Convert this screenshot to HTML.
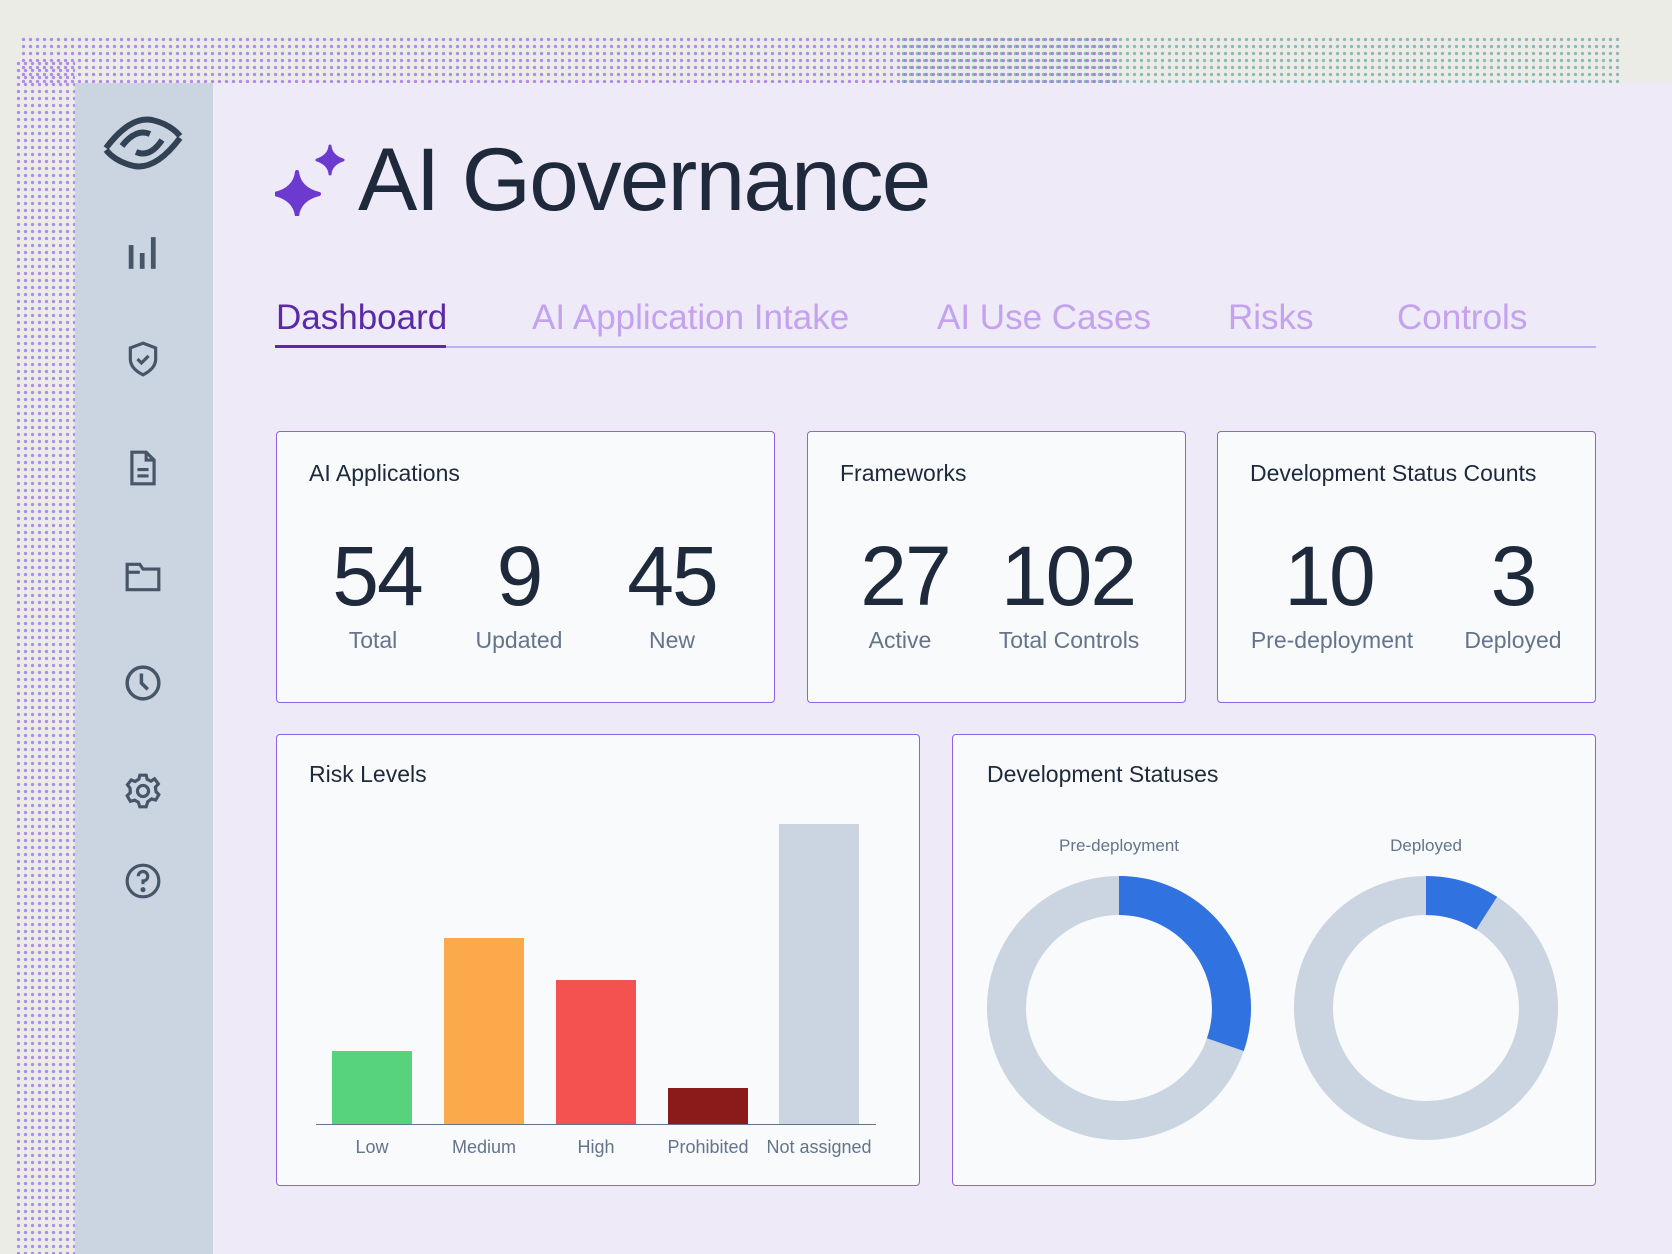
<!DOCTYPE html>
<html><head><meta charset="utf-8"><style>
*{margin:0;padding:0;box-sizing:border-box}
body{width:1672px;height:1254px;overflow:hidden;background:#ecece7;font-family:"Liberation Sans",sans-serif;position:relative}
.dots{position:absolute;background-image:radial-gradient(circle,rgba(150,100,235,.7) 1.5px,transparent 1.9px);background-size:7px 7px}
.dots2{position:absolute;background-image:radial-gradient(circle,rgba(80,150,160,.6) 1.5px,transparent 1.9px);background-size:7px 7px}
.panel{position:absolute;left:75px;top:83px;width:1597px;height:1171px;background:#eeeaf8}
.side{position:absolute;left:75px;top:83px;width:138px;height:1171px;background:#cbd5e1}
.ic{position:absolute;left:124px;width:38px;height:38px}
.card{position:absolute;background:#f8fafc;border:1.6px solid #8f62e4;border-radius:4px}
.ct{position:absolute;left:32px;top:28px;font-size:23px;color:#1e293b}
.num{position:absolute;top:102px;font-size:84px;color:#1e293b;transform:translateX(-50%);letter-spacing:-2px;line-height:1}
.lab{position:absolute;top:195px;font-size:23px;color:#64748b;transform:translateX(-50%);white-space:nowrap}
.tab{position:absolute;top:298px;font-size:35px;color:#c4a2ee}
.bar{position:absolute;width:80px}
.bl{position:absolute;top:1137px;font-size:18px;color:#64748b;transform:translateX(-50%);white-space:nowrap}
</style></head><body>
<div class="dots" style="left:20px;top:36px;width:1100px;height:47px"></div>
<div class="dots2" style="left:900px;top:36px;width:720px;height:47px"></div>
<div class="dots" style="left:15px;top:60px;width:60px;height:1194px"></div>
<div class="panel"></div>
<div class="side"></div>
<svg class="ic" style="left:100px;top:112px;width:86px;height:62px" viewBox="0 0 86 62" fill="none" stroke="#334155" stroke-width="6">
<path d="M6 36 Q30 4 52 8 Q70 12 80 24"/><path d="M80 26 Q56 58 34 54 Q16 50 6 38"/><path d="M22 34 Q36 16 50 22"/><path d="M62 28 Q50 46 36 40"/></svg>
<svg class="ic" style="top:234px" viewBox="0 0 24 24" fill="#475569"><rect x="3" y="7" width="3" height="15"/><rect x="10" y="12" width="3" height="10"/><rect x="17" y="2" width="3" height="20"/></svg>
<svg class="ic" style="top:340px" viewBox="0 0 24 24" fill="none" stroke="#475569" stroke-width="2"><path d="M12 2 L20 5 V12 C20 17 16 20 12 22 C8 20 4 17 4 12 V5 Z"/><path d="M8.5 12 L11 14.5 L15.5 10"/></svg>
<svg class="ic" style="top:449px" viewBox="0 0 24 24" fill="none" stroke="#475569" stroke-width="2"><path d="M5 2 H14 L19 7 V22 H5 Z"/><path d="M14 2 V7 H19"/><path d="M8.5 13 H15.5 M8.5 17 H15.5"/></svg>
<svg class="ic" style="top:558px" viewBox="0 0 24 24" fill="none" stroke="#475569" stroke-width="2"><path d="M2 4 H10 L12 7 H22 V20 H2 Z"/><path d="M2 9 H10"/></svg>
<svg class="ic" style="top:664px" viewBox="0 0 24 24" fill="none" stroke="#475569" stroke-width="2.2"><circle cx="12" cy="12" r="10"/><path d="M11 6 V12 L15 16"/></svg>
<svg class="ic" style="top:772px" viewBox="0 0 24 24" fill="none" stroke="#475569" stroke-width="2"><circle cx="12" cy="12" r="3.5"/><path d="M10 2 H14 L14.6 4.6 L17 5.8 L19.3 4.3 L21.7 7.5 L19.8 9.6 L20.2 12.4 L22 14.3 L20 17.7 L17.4 17 L15 18.8 L14 22 H10 L9 19 L6.7 17.8 L4 18.5 L2 15 L4 13 L3.8 10.2 L2.2 8 L4.6 5 L7 6 L9.4 4.5 Z"/></svg>
<svg class="ic" style="top:862px" viewBox="0 0 24 24" fill="none" stroke="#475569" stroke-width="2"><circle cx="12" cy="12" r="10"/><path d="M9 9 A3 3 0 1 1 12 12 V14"/><circle cx="12" cy="17.5" r=".6" fill="#475569"/></svg>
<svg style="position:absolute;left:275px;top:144px" width="70" height="72" viewBox="0 0 70 72" fill="#6d3ad0"><path d="M22 28 Q24 45 44 50 Q24 55 22 72 Q20 55 0 50 Q20 45 22 28 Z" stroke="#6d3ad0" stroke-width="4" stroke-linejoin="round"/><path d="M55 2 Q56 12 68 16 Q56 20 55 30 Q54 20 42 16 Q54 12 55 2 Z" stroke="#6d3ad0" stroke-width="3" stroke-linejoin="round"/></svg>
<div style="position:absolute;left:358px;top:128px;font-size:89px;color:#1e293b;letter-spacing:-1.7px">AI Governance</div>
<div class="tab" style="left:276px;color:#5b2aa8">Dashboard</div>
<div class="tab" style="left:532px">AI Application Intake</div>
<div class="tab" style="left:937px">AI Use Cases</div>
<div class="tab" style="left:1228px">Risks</div>
<div class="tab" style="left:1397px">Controls</div>
<div style="position:absolute;left:275px;top:346px;width:1321px;height:2px;background:#c8aaf0"></div>
<div style="position:absolute;left:275px;top:345px;width:171px;height:3px;background:#5b2aa8"></div>

<div class="card" style="left:276px;top:431px;width:499px;height:272px"><div class="ct">AI Applications</div>
<div class="num" style="left:100px">54</div><div class="num" style="left:242px">9</div><div class="num" style="left:395px">45</div>
<div class="lab" style="left:96px">Total</div><div class="lab" style="left:242px">Updated</div><div class="lab" style="left:395px">New</div></div>
<div class="card" style="left:807px;top:431px;width:379px;height:272px"><div class="ct">Frameworks</div>
<div class="num" style="left:97px">27</div><div class="num" style="left:260px">102</div>
<div class="lab" style="left:92px">Active</div><div class="lab" style="left:261px">Total Controls</div></div>
<div class="card" style="left:1217px;top:431px;width:379px;height:272px"><div class="ct">Development Status Counts</div>
<div class="num" style="left:111px">10</div><div class="num" style="left:295px">3</div>
<div class="lab" style="left:114px">Pre-deployment</div><div class="lab" style="left:295px">Deployed</div></div>

<div class="card" style="left:276px;top:734px;width:644px;height:452px"><div class="ct" style="top:26px">Risk Levels</div></div>
<div class="bar" style="left:332px;top:1051px;height:73px;background:#57d37b"></div>
<div class="bar" style="left:444px;top:938px;height:186px;background:#fca94c"></div>
<div class="bar" style="left:556px;top:980px;height:144px;background:#f45151"></div>
<div class="bar" style="left:668px;top:1088px;height:36px;background:#8b1b1b"></div>
<div class="bar" style="left:779px;top:824px;height:300px;background:#cbd5e1"></div>
<div style="position:absolute;left:316px;top:1124px;width:560px;height:1px;background:#64748b"></div>
<div class="bl" style="left:372px">Low</div><div class="bl" style="left:484px">Medium</div><div class="bl" style="left:596px">High</div><div class="bl" style="left:708px">Prohibited</div><div class="bl" style="left:819px">Not assigned</div>

<div class="card" style="left:952px;top:734px;width:644px;height:452px"><div class="ct" style="left:34px;top:26px">Development Statuses</div></div>
<div class="bl" style="left:1119px;top:836px;font-size:17px">Pre-deployment</div>
<div class="bl" style="left:1426px;top:836px;font-size:17px">Deployed</div>
<svg style="position:absolute;left:980px;top:870px" width="600" height="280" viewBox="980 870 600 280">
<circle cx="1119" cy="1008" r="112.5" fill="none" stroke="#cbd5e1" stroke-width="39"/>
<circle cx="1119" cy="1008" r="112.5" fill="none" stroke="#2f72e0" stroke-width="39" stroke-dasharray="214 1000" transform="rotate(-90 1119 1008)"/>
<circle cx="1426" cy="1008" r="112.5" fill="none" stroke="#cbd5e1" stroke-width="39"/>
<circle cx="1426" cy="1008" r="112.5" fill="none" stroke="#2f72e0" stroke-width="39" stroke-dasharray="64 1000" transform="rotate(-90 1426 1008)"/>
</svg>
</body></html>
